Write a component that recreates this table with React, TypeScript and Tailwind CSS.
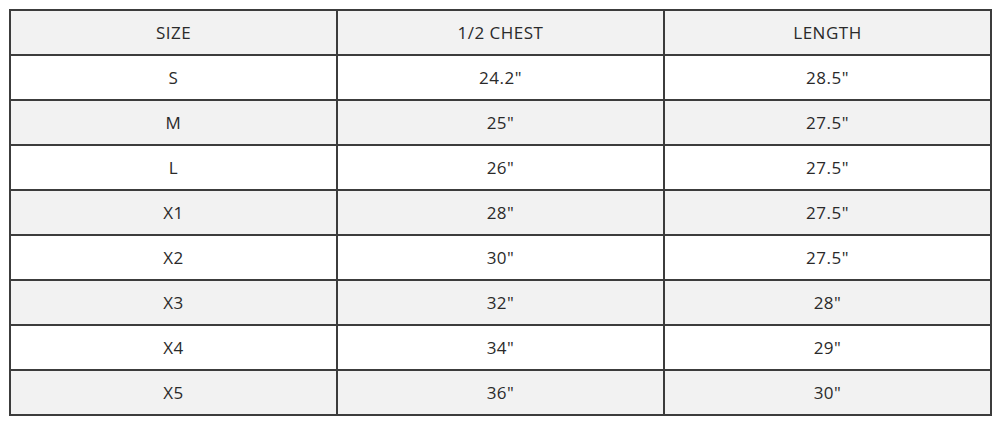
import React from "react";

const rows: [string, string, string][] = [
  ["S", '24.2"', '28.5"'],
  ["M", '25"', '27.5"'],
  ["L", '26"', '27.5"'],
  ["X1", '28"', '27.5"'],
  ["X2", '30"', '27.5"'],
  ["X3", '32"', '28"'],
  ["X4", '34"', '29"'],
  ["X5", '36"', '30"'],
];

export default function App() {
  return (
    <div className="w-[1000px] h-[424px] bg-white pt-[9px] pl-[9px]" style={{ fontFamily: "'Open Sans', 'Noto Sans', sans-serif" }}>
      <table className="w-[983px] border-collapse text-[17px] tracking-[0.5px] text-[#2a2a2a]">
        <thead>
          <tr className="bg-[#f2f2f2] h-[45px]">
            {["SIZE", "1/2 CHEST", "LENGTH"].map((h) => (
              <th key={h} className="w-1/3 border-2 border-[#3c3c3c] font-normal text-center p-0">
                {h}
              </th>
            ))}
          </tr>
        </thead>
        <tbody>
          {rows.map((r, i) => (
            <tr key={r[0]} className={i % 2 === 0 ? "bg-white h-[45px]" : "bg-[#f2f2f2] h-[45px]"}>
              {r.map((c, j) => (
                <td key={j} className="border-2 border-[#3c3c3c] text-center p-0">
                  {c}
                </td>
              ))}
            </tr>
          ))}
        </tbody>
      </table>
    </div>
  );
}
